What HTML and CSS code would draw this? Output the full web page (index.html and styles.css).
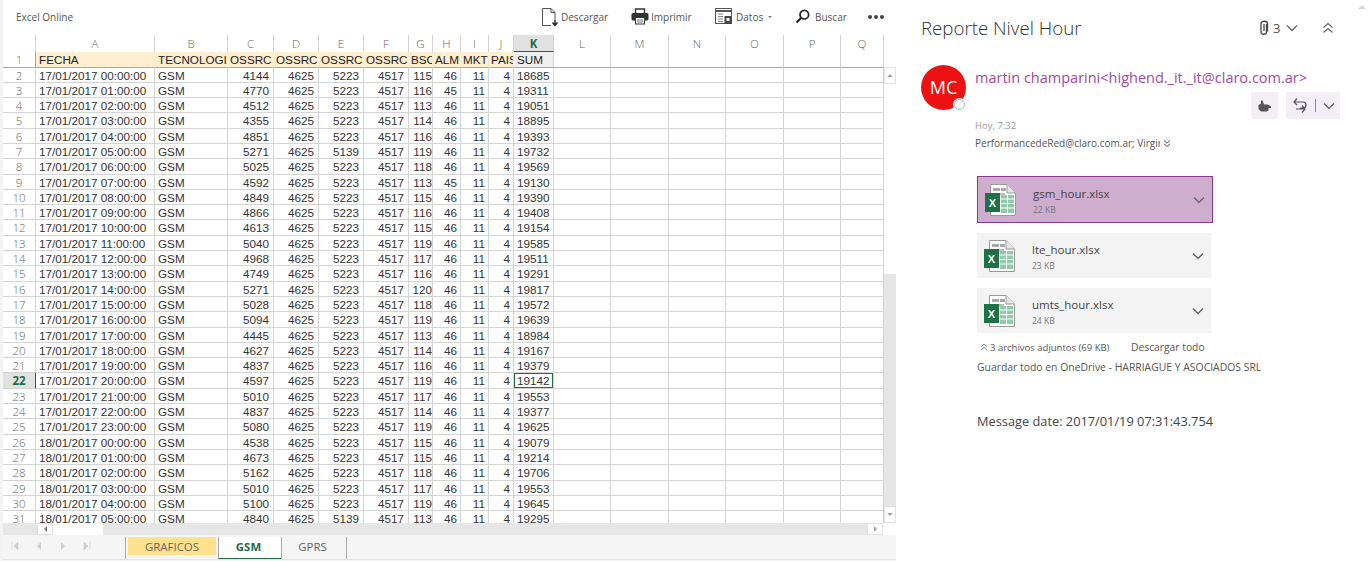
FILE: index.html
```html
<!DOCTYPE html>
<html lang="en">
<head>
  <meta charset="UTF-8">
  <title>Reporte Nivel Hour</title>
  <link rel="stylesheet" href="styles.css">
</head>
<body>
  <svg class="defs" width="0" height="0">
    <symbol id="xls" viewBox="0 0 34 34">
      <path d="M6.5 1.5H23L31.5 10V32.5H6.5Z" fill="#fff" stroke="#9a9a9a"/>
      <path d="M23 1.5V10H31.5" fill="#e4e4e4" stroke="#9a9a9a"/>
      <rect x="9" y="5" width="7" height="3" fill="#a8a8a8"/>
      <rect x="17" y="5" width="5" height="3" fill="#a8a8a8"/>
      <rect x="9" y="10" width="12" height="2.5" fill="#bdbdbd"/>
      <path d="M17 12H30V30H17Z" fill="#8fcbaa"/>
      <path d="M17 16H30M17 20.5H30M17 25H30M23.5 12V30" stroke="#fff" stroke-width="1"/>
      <rect x="1" y="10" width="15" height="19" fill="#1e7145"/>
      <text x="8.5" y="24" class="xls-x">X</text>
    </symbol>
    <symbol id="chev" viewBox="0 0 12 8">
      <path d="M1 1.5L6 6.5L11 1.5" fill="none" stroke="currentColor" stroke-width="1.4"/>
    </symbol>
    <symbol id="dbl-up" viewBox="0 0 12 12">
      <path d="M1.5 5.5L6 1.5L10.5 5.5M1.5 10.5L6 6.5L10.5 10.5" fill="none" stroke="currentColor" stroke-width="1.2"/>
    </symbol>
  </svg>

  <div class="excel">
    <header class="toolbar">
      <span class="brand">Excel Online</span>
      <nav class="tools">
        <span class="tool tool-dl">
          <svg width="18" height="20" viewBox="0 0 18 20"><path d="M1.5 1.5H10L14 5.5V12M10 1.5V5.5H14M1.5 1.5V18.5H10" fill="none" stroke="#555" stroke-width="1"/><path d="M14 12.5V18M11.5 15.5L14 18.5L16.5 15.5" fill="none" stroke="#222" stroke-width="1.4"/></svg>
          Descargar
        </span>
        <span class="tool tool-print">
          <svg width="18" height="17" viewBox="0 0 18 17"><path d="M4.5 5V1H13.5V5" fill="none" stroke="#333" stroke-width="1.4"/><rect x="0.5" y="5" width="17" height="7.5" rx="1.5" fill="#333"/><rect x="4.5" y="9.5" width="9" height="6.5" fill="#fff" stroke="#333"/><path d="M6 12H12M6 14H12" stroke="#777"/></svg>
          Imprimir
        </span>
        <span class="tool tool-data">
          <svg width="18" height="17" viewBox="0 0 18 17"><rect x="0.5" y="0.5" width="16" height="15" fill="#fff" stroke="#555"/><path d="M1 3H16" stroke="#555" stroke-width="2"/><path d="M3 6H8M3 8.5H8M3 11H8M3 13.5H8" stroke="#888" stroke-width="1.2"/><rect x="9.5" y="8" width="7" height="8" fill="#444"/><rect x="11.5" y="10" width="3" height="3" fill="#fff"/></svg>
          Datos <i class="caret"></i>
        </span>
        <span class="tool tool-find">
          <svg width="15" height="15" viewBox="0 0 15 15"><circle cx="9.3" cy="5.7" r="4.3" fill="none" stroke="#222" stroke-width="1.7"/><path d="M6 9L1.5 13.5" stroke="#222" stroke-width="2.2"/></svg>
          Buscar
        </span>
        <span class="more"><b></b><b></b><b></b></span>
      </nav>
    </header>

    <div class="sheet-area">
      <div class="sheet">
        <div class="row heads">
          <span></span><span>A</span><span>B</span><span>C</span><span>D</span><span>E</span><span>F</span><span>G</span><span>H</span><span>I</span><span>J</span><span class="on">K</span><span>L</span><span>M</span><span>N</span><span>O</span><span>P</span><span>Q</span>
        </div>
        <div class="row title-row">
          <span>1</span><span>FECHA</span><span>TECNOLOGIA</span><span>OSSRC</span><span>OSSRC</span><span>OSSRC</span><span>OSSRC</span><span>BSC</span><span>ALM</span><span>MKT</span><span>PAIS</span><span>SUM</span><span></span><span></span><span></span><span></span><span></span><span></span>
        </div>
        <div class="row"><span>2</span><span>17/01/2017 00:00:00</span><span>GSM</span><span>4144</span><span>4625</span><span>5223</span><span>4517</span><span>115</span><span>46</span><span>11</span><span>4</span><span>18685</span><span></span><span></span><span></span><span></span><span></span><span></span></div>
        <div class="row"><span>3</span><span>17/01/2017 01:00:00</span><span>GSM</span><span>4770</span><span>4625</span><span>5223</span><span>4517</span><span>116</span><span>45</span><span>11</span><span>4</span><span>19311</span><span></span><span></span><span></span><span></span><span></span><span></span></div>
        <div class="row"><span>4</span><span>17/01/2017 02:00:00</span><span>GSM</span><span>4512</span><span>4625</span><span>5223</span><span>4517</span><span>113</span><span>46</span><span>11</span><span>4</span><span>19051</span><span></span><span></span><span></span><span></span><span></span><span></span></div>
        <div class="row"><span>5</span><span>17/01/2017 03:00:00</span><span>GSM</span><span>4355</span><span>4625</span><span>5223</span><span>4517</span><span>114</span><span>46</span><span>11</span><span>4</span><span>18895</span><span></span><span></span><span></span><span></span><span></span><span></span></div>
        <div class="row"><span>6</span><span>17/01/2017 04:00:00</span><span>GSM</span><span>4851</span><span>4625</span><span>5223</span><span>4517</span><span>116</span><span>46</span><span>11</span><span>4</span><span>19393</span><span></span><span></span><span></span><span></span><span></span><span></span></div>
        <div class="row"><span>7</span><span>17/01/2017 05:00:00</span><span>GSM</span><span>5271</span><span>4625</span><span>5139</span><span>4517</span><span>119</span><span>46</span><span>11</span><span>4</span><span>19732</span><span></span><span></span><span></span><span></span><span></span><span></span></div>
        <div class="row"><span>8</span><span>17/01/2017 06:00:00</span><span>GSM</span><span>5025</span><span>4625</span><span>5223</span><span>4517</span><span>118</span><span>46</span><span>11</span><span>4</span><span>19569</span><span></span><span></span><span></span><span></span><span></span><span></span></div>
        <div class="row"><span>9</span><span>17/01/2017 07:00:00</span><span>GSM</span><span>4592</span><span>4625</span><span>5223</span><span>4517</span><span>113</span><span>45</span><span>11</span><span>4</span><span>19130</span><span></span><span></span><span></span><span></span><span></span><span></span></div>
        <div class="row"><span>10</span><span>17/01/2017 08:00:00</span><span>GSM</span><span>4849</span><span>4625</span><span>5223</span><span>4517</span><span>115</span><span>46</span><span>11</span><span>4</span><span>19390</span><span></span><span></span><span></span><span></span><span></span><span></span></div>
        <div class="row"><span>11</span><span>17/01/2017 09:00:00</span><span>GSM</span><span>4866</span><span>4625</span><span>5223</span><span>4517</span><span>116</span><span>46</span><span>11</span><span>4</span><span>19408</span><span></span><span></span><span></span><span></span><span></span><span></span></div>
        <div class="row"><span>12</span><span>17/01/2017 10:00:00</span><span>GSM</span><span>4613</span><span>4625</span><span>5223</span><span>4517</span><span>115</span><span>46</span><span>11</span><span>4</span><span>19154</span><span></span><span></span><span></span><span></span><span></span><span></span></div>
        <div class="row"><span>13</span><span>17/01/2017 11:00:00</span><span>GSM</span><span>5040</span><span>4625</span><span>5223</span><span>4517</span><span>119</span><span>46</span><span>11</span><span>4</span><span>19585</span><span></span><span></span><span></span><span></span><span></span><span></span></div>
        <div class="row"><span>14</span><span>17/01/2017 12:00:00</span><span>GSM</span><span>4968</span><span>4625</span><span>5223</span><span>4517</span><span>117</span><span>46</span><span>11</span><span>4</span><span>19511</span><span></span><span></span><span></span><span></span><span></span><span></span></div>
        <div class="row"><span>15</span><span>17/01/2017 13:00:00</span><span>GSM</span><span>4749</span><span>4625</span><span>5223</span><span>4517</span><span>116</span><span>46</span><span>11</span><span>4</span><span>19291</span><span></span><span></span><span></span><span></span><span></span><span></span></div>
        <div class="row"><span>16</span><span>17/01/2017 14:00:00</span><span>GSM</span><span>5271</span><span>4625</span><span>5223</span><span>4517</span><span>120</span><span>46</span><span>11</span><span>4</span><span>19817</span><span></span><span></span><span></span><span></span><span></span><span></span></div>
        <div class="row"><span>17</span><span>17/01/2017 15:00:00</span><span>GSM</span><span>5028</span><span>4625</span><span>5223</span><span>4517</span><span>118</span><span>46</span><span>11</span><span>4</span><span>19572</span><span></span><span></span><span></span><span></span><span></span><span></span></div>
        <div class="row"><span>18</span><span>17/01/2017 16:00:00</span><span>GSM</span><span>5094</span><span>4625</span><span>5223</span><span>4517</span><span>119</span><span>46</span><span>11</span><span>4</span><span>19639</span><span></span><span></span><span></span><span></span><span></span><span></span></div>
        <div class="row"><span>19</span><span>17/01/2017 17:00:00</span><span>GSM</span><span>4445</span><span>4625</span><span>5223</span><span>4517</span><span>113</span><span>46</span><span>11</span><span>4</span><span>18984</span><span></span><span></span><span></span><span></span><span></span><span></span></div>
        <div class="row"><span>20</span><span>17/01/2017 18:00:00</span><span>GSM</span><span>4627</span><span>4625</span><span>5223</span><span>4517</span><span>114</span><span>46</span><span>11</span><span>4</span><span>19167</span><span></span><span></span><span></span><span></span><span></span><span></span></div>
        <div class="row"><span>21</span><span>17/01/2017 19:00:00</span><span>GSM</span><span>4837</span><span>4625</span><span>5223</span><span>4517</span><span>116</span><span>46</span><span>11</span><span>4</span><span>19379</span><span></span><span></span><span></span><span></span><span></span><span></span></div>
        <div class="row active"><span>22</span><span>17/01/2017 20:00:00</span><span>GSM</span><span>4597</span><span>4625</span><span>5223</span><span>4517</span><span>119</span><span>46</span><span>11</span><span>4</span><span>19142</span><span></span><span></span><span></span><span></span><span></span><span></span></div>
        <div class="row"><span>23</span><span>17/01/2017 21:00:00</span><span>GSM</span><span>5010</span><span>4625</span><span>5223</span><span>4517</span><span>117</span><span>46</span><span>11</span><span>4</span><span>19553</span><span></span><span></span><span></span><span></span><span></span><span></span></div>
        <div class="row"><span>24</span><span>17/01/2017 22:00:00</span><span>GSM</span><span>4837</span><span>4625</span><span>5223</span><span>4517</span><span>114</span><span>46</span><span>11</span><span>4</span><span>19377</span><span></span><span></span><span></span><span></span><span></span><span></span></div>
        <div class="row"><span>25</span><span>17/01/2017 23:00:00</span><span>GSM</span><span>5080</span><span>4625</span><span>5223</span><span>4517</span><span>119</span><span>46</span><span>11</span><span>4</span><span>19625</span><span></span><span></span><span></span><span></span><span></span><span></span></div>
        <div class="row"><span>26</span><span>18/01/2017 00:00:00</span><span>GSM</span><span>4538</span><span>4625</span><span>5223</span><span>4517</span><span>115</span><span>46</span><span>11</span><span>4</span><span>19079</span><span></span><span></span><span></span><span></span><span></span><span></span></div>
        <div class="row"><span>27</span><span>18/01/2017 01:00:00</span><span>GSM</span><span>4673</span><span>4625</span><span>5223</span><span>4517</span><span>115</span><span>46</span><span>11</span><span>4</span><span>19214</span><span></span><span></span><span></span><span></span><span></span><span></span></div>
        <div class="row"><span>28</span><span>18/01/2017 02:00:00</span><span>GSM</span><span>5162</span><span>4625</span><span>5223</span><span>4517</span><span>118</span><span>46</span><span>11</span><span>4</span><span>19706</span><span></span><span></span><span></span><span></span><span></span><span></span></div>
        <div class="row"><span>29</span><span>18/01/2017 03:00:00</span><span>GSM</span><span>5010</span><span>4625</span><span>5223</span><span>4517</span><span>117</span><span>46</span><span>11</span><span>4</span><span>19553</span><span></span><span></span><span></span><span></span><span></span><span></span></div>
        <div class="row"><span>30</span><span>18/01/2017 04:00:00</span><span>GSM</span><span>5100</span><span>4625</span><span>5223</span><span>4517</span><span>119</span><span>46</span><span>11</span><span>4</span><span>19645</span><span></span><span></span><span></span><span></span><span></span><span></span></div>
        <div class="row"><span>31</span><span>18/01/2017 05:00:00</span><span>GSM</span><span>4840</span><span>4625</span><span>5139</span><span>4517</span><span>113</span><span>46</span><span>11</span><span>4</span><span>19295</span><span></span><span></span><span></span><span></span><span></span><span></span></div>
      </div>
      <div class="vbar">
        <div class="vbar-gap"></div>
        <div class="sb-btn"><i class="tri tri-up"></i></div>
        <div class="vbar-thumb"></div>
        <div class="vbar-track"></div>
        <div class="sb-btn"><i class="tri tri-down"></i></div>
      </div>
    </div>

    <div class="hbar">
      <div class="sb-btn hbar-btn"><i class="tri tri-left"></i></div>
      <div class="hbar-thumb"></div>
      <div class="hbar-track"></div>
      <div class="sb-btn hbar-btn"><i class="tri tri-right"></i></div>
      <div class="hbar-corner"></div>
    </div>

    <footer class="tabs">
      <div class="tab-nav">
        <svg width="8" height="8" viewBox="0 0 8 8"><path d="M1 0V8M7 0V8L3 4Z" fill="#cfcfcf" stroke="#cfcfcf" stroke-width="0.6"/></svg>
        <svg width="8" height="8" viewBox="0 0 8 8"><path d="M6 0V8L2 4Z" fill="#cfcfcf"/></svg>
        <svg width="8" height="8" viewBox="0 0 8 8"><path d="M2 0V8L6 4Z" fill="#cfcfcf"/></svg>
        <svg width="8" height="8" viewBox="0 0 8 8"><path d="M7 0V8M1 0V8L5 4Z" fill="#cfcfcf" stroke="#cfcfcf" stroke-width="0.6"/></svg>
      </div>
      <span class="tab tab-yellow">GRAFICOS</span>
      <span class="tab tab-active">GSM</span>
      <span class="tab tab-plain">GPRS</span>
    </footer>
  </div>

  <main class="mail">
    <i class="mail-scroll"></i>
    <div class="subject-row">
      <h1 class="subject">Reporte Nivel Hour</h1>
      <div class="subject-side">
        <svg class="clip" width="10" height="16" viewBox="0 0 10 16"><path d="M7.5 4V12C7.5 15 2 15 2 12V3.5C2 .5 8.5 .5 8.5 3.5V11.5" fill="none" stroke="#444" stroke-width="1.3"/><path d="M5 4V11" stroke="#444" stroke-width="1.3"/></svg>
        <span class="count">3</span>
        <svg class="ico-chev" width="12" height="8"><use href="#chev"/></svg>
        <svg class="ico-dbl" width="12" height="12"><use href="#dbl-up"/></svg>
      </div>
    </div>

    <section class="from">
      <div class="avatar">MC<i class="presence"></i></div>
      <div class="from-body">
        <a class="sender">martin champarini&lt;highend._it._it@claro.com.ar&gt;</a>
        <div class="actions">
          <span class="act act-like">
            <svg width="13" height="12" viewBox="0 0 13 12"><path d="M3 .5H4.5L6 4.5H10L13 6.5V8H10.5V10.5L8.5 11.5H3L.5 9V5L3 3.5Z" fill="#555"/></svg>
          </span>
          <span class="act act-reply">
            <svg width="16" height="17" viewBox="0 0 16 17"><path d="M5 1.5L2 5L5 8M2 5H11C15 5 15 11 11 11H8M10 8.5L13 12L10 15.5M13 12H4" fill="none" stroke="#555" stroke-width="1.2"/></svg>
            <i class="act-sep"></i>
            <svg class="ico-chev" width="12" height="8"><use href="#chev"/></svg>
          </span>
        </div>
        <div class="when">Hoy, 7:32</div>
        <div class="to">
          <span class="to-text">PerformancedeRed@claro.com.ar; Virginia</span>
          <svg width="8" height="9" viewBox="0 0 12 12"><path d="M1.5 1.5L6 5.5L10.5 1.5M1.5 6.5L6 10.5L10.5 6.5" fill="none" stroke="#555" stroke-width="1.5"/></svg>
        </div>
      </div>
    </section>

    <section class="files">
      <div class="file file-on">
        <svg class="file-ico" width="34" height="34"><use href="#xls"/></svg>
        <div class="file-info"><div class="file-name">gsm_hour.xlsx</div><div class="file-size">22 KB</div></div>
        <svg class="ico-chev" width="12" height="8"><use href="#chev"/></svg>
      </div>
      <div class="file">
        <svg class="file-ico" width="34" height="34"><use href="#xls"/></svg>
        <div class="file-info"><div class="file-name">lte_hour.xlsx</div><div class="file-size">23 KB</div></div>
        <svg class="ico-chev" width="12" height="8"><use href="#chev"/></svg>
      </div>
      <div class="file">
        <svg class="file-ico" width="34" height="34"><use href="#xls"/></svg>
        <div class="file-info"><div class="file-name">umts_hour.xlsx</div><div class="file-size">24 KB</div></div>
        <svg class="ico-chev" width="12" height="8"><use href="#chev"/></svg>
      </div>
    </section>

    <div class="files-meta">
      <svg width="8" height="8"><use href="#dbl-up"/></svg>
      <span class="files-count">3 archivos adjuntos (69 KB)</span>
      <span class="files-dl">Descargar todo</span>
    </div>
    <div class="files-save">Guardar todo en OneDrive - HARRIAGUE Y ASOCIADOS SRL</div>
    <p class="msg-date">Message date: 2017/01/19 07:31:43.754</p>
  </main>
</body>
</html>
```

FILE: styles.css
```css
* {
  box-sizing: border-box;
}
html, body {
  height: 100%;
}
body {
  margin: 0;
  display: flex;
  overflow: hidden;
  background: #fff;
  color: #444;
  font-family: 'Open Sans', sans-serif;
}
.defs {
  position: absolute;
}
.xls-x {
  font: bold 11px 'Liberation Sans', sans-serif;
  fill: #fff;
  text-anchor: middle;
}

/* Excel side */
.excel {
  width: 896px;
  height: 561px;
  flex: none;
  display: flex;
  flex-direction: column;
  padding-left: 3px;
  background: #f3f3f3;
}
.toolbar {
  height: 35px;
  flex: none;
  display: flex;
  align-items: center;
  justify-content: space-between;
  background: #fff;
  padding: 0 0 2px 13px;
  font-size: 10px;
  color: #555;
}
.tools {
  display: flex;
  align-items: center;
}
.tool {
  display: flex;
  align-items: center;
  gap: 2px;
}
.tool-dl { width: 90px; }
.tool-print { width: 84px; }
.tool-data { width: 80px; gap: 3px; }
.tool-find { width: 73px; gap: 5px; }
.caret {
  width: 0;
  height: 0;
  margin-left: 2px;
  border: 2.5px solid transparent;
  border-top-color: #777;
  border-bottom: 0;
}
.more {
  display: flex;
  gap: 2px;
  width: 28px;
}
.more b {
  width: 4px;
  height: 4px;
  border-radius: 50%;
  background: #444;
}

.sheet-area {
  height: 488px;
  flex: none;
  display: flex;
  background: #fff;
}
.sheet {
  width: 881px;
  overflow: hidden;
  font: 11.7px/15px 'Liberation Sans', sans-serif;
  color: #333;
}
.row {
  height: 15.3px;
  display: grid;
  grid-template-columns: 33px 119px 73px 46px 45px 45px 45px 24px 28px 28px 25px 40px 57px 58px 57px 58px 57px 43px;
}
.row span {
  border-right: 1px solid #d4d4d4;
  border-bottom: 1px solid #d4d4d4;
  padding: 0 3px;
  overflow: hidden;
  white-space: nowrap;
  min-width: 0;
}
.row span:nth-child(1) {
  padding: 0;
  text-align: center;
  font-family: 'Open Sans', sans-serif;
  font-size: 11.5px;
  font-weight: 300;
  color: #666;
  background: #fff;
}
.row span:nth-child(n+4):nth-child(-n+11) {
  text-align: right;
}
.row span:nth-child(n+4):nth-child(-n+7) {
  padding-right: 4px;
}
.row span:nth-child(8) {
  padding: 0 0 0 2px;
}
.heads {
  height: 17px;
}
.heads span,
.heads span:nth-child(n+4):nth-child(-n+11) {
  border-bottom: 0;
  padding: 0;
  text-align: center;
  font-family: 'Open Sans', sans-serif;
  font-size: 11.5px;
  font-weight: 300;
  line-height: 17px;
  color: #666;
}
.heads .on,
.heads .on:nth-child(n+4) {
  background: #e1e1e1;
  border-bottom: 1px solid #1e6b45;
  color: #1e6b45;
  font-weight: 700;
}
.title-row {
  height: 15.5px;
}
.title-row span {
  background: #ffeecf;
  border-right-color: #ffeecf;
  border-bottom-color: #a9a9a9;
  color: #222;
}
.title-row span:nth-child(n+4):nth-child(-n+11) {
  text-align: left;
  padding: 0 0 0 2px;
}
.title-row span:nth-child(1) {
  border-right-color: #a9a9a9;
}
.title-row span:nth-child(12) {
  background: #efefef;
  border-right-color: #d4d4d4;
}
.title-row span:nth-child(n+13) {
  background: #fff;
  border-right-color: #d4d4d4;
}
.active span:nth-child(1) {
  background: #e1e1e1;
  color: #1e6b45;
  font-weight: 700;
  border-right: 1px solid #1e6b45;
}
.active span:nth-child(12) {
  box-shadow: inset 0 0 0 1px #1e6b45;
}

.vbar {
  width: 12px;
  flex: none;
  display: flex;
  flex-direction: column;
}
.vbar-gap {
  height: 32px;
}
.sb-btn {
  height: 17px;
  flex: none;
  display: flex;
  align-items: center;
  justify-content: center;
  background: #fff;
  border: 1px solid #e1e1e1;
}
.vbar-thumb {
  height: 190px;
  background: #fff;
}
.vbar-track {
  flex: 1;
  background: #e6e6e6;
}
.tri {
  width: 0;
  height: 0;
  border: 3.5px solid transparent;
}
.tri-up { border-bottom-color: #a6a6a6; border-top: 0; }
.tri-down { border-top-color: #a6a6a6; border-bottom: 0; }
.tri-left { border-right-color: #777; border-left: 0; }
.tri-right { border-left-color: #a6a6a6; border-right: 0; }

.hbar {
  height: 12px;
  flex: none;
  display: flex;
  background: #e6e6e6;
}
.hbar-btn {
  height: 12px;
  width: 16px;
  margin-left: 34px;
}
.hbar-btn:nth-last-child(2) {
  margin-left: 0;
}
.hbar-thumb {
  width: 50px;
  background: #fff;
}
.hbar-track {
  flex: 1;
}
.hbar-corner {
  width: 13px;
  background: #fff;
}

.tabs {
  height: 25px;
  flex: none;
  display: flex;
  align-items: flex-start;
  padding-top: 2px;
  background: #f5f5f5;
  border-bottom: 1px solid #e4e4e4;
  font-size: 11.4px;
  color: #666;
}
.tab-nav {
  width: 122px;
  height: 18px;
  flex: none;
  display: flex;
  align-items: center;
  gap: 16px;
  padding-left: 8px;
}
.tab {
  height: 22px;
  display: flex;
  justify-content: center;
  align-items: center;
  padding-bottom: 3px;
  border-left: 1px solid #aaa;
}
.tab-yellow {
  width: 93px;
  padding: 0 2px 4px 2px;
  background: #ffe08c;
  background-clip: content-box;
}
.tab-active {
  width: 63px;
  padding-right: 3px;
  background: #fff;
  border-bottom: 1px solid #1e6b45;
  color: #1e6b45;
  font-weight: 700;
}
.tab-plain {
  width: 66px;
  padding-right: 3px;
  border-right: 1px solid #aaa;
}

/* Mail side */
.mail {
  position: relative;
  flex: 1;
  padding-left: 25px;
}
.mail-scroll {
  position: absolute;
  top: 5px;
  right: 2px;
  width: 0;
  height: 0;
  border: 4px solid transparent;
  border-bottom-color: #d9d9d9;
  border-top: 0;
}
.subject-row {
  height: 24px;
  margin-top: 16px;
  display: flex;
  align-items: center;
}
.subject {
  width: 338px;
  flex: none;
  margin: 0;
  font-size: 18.7px;
  font-weight: 300;
  line-height: 24px;
  color: #333;
}
.subject-side {
  display: flex;
  align-items: center;
  color: #555;
  font-size: 13px;
}
.count {
  margin: 0 6px 0 4px;
}
.ico-chev {
  flex: none;
  color: #666;
}
.ico-dbl {
  margin-left: 24px;
  color: #666;
}
.from {
  display: flex;
  margin-top: 25px;
}
.avatar {
  position: relative;
  width: 45px;
  height: 45px;
  flex: none;
  border-radius: 50%;
  background: #ee1111;
  color: #fff;
  font-size: 18px;
  line-height: 45px;
  text-align: center;
}
.presence {
  position: absolute;
  right: 1px;
  bottom: 0;
  width: 11px;
  height: 11px;
  border-radius: 50%;
  background: #fff;
  border: 1px solid #9cc8dc;
  box-shadow: 0 0 0 1px #fff;
}
.from-body {
  margin-left: 9px;
  width: 365px;
}
.sender {
  display: block;
  margin-top: 4px;
  font-size: 14.5px;
  line-height: 18px;
  color: #a349a4;
  white-space: nowrap;
}
.actions {
  display: flex;
  justify-content: flex-end;
  gap: 8px;
  margin-top: 5px;
}
.act {
  height: 27px;
  display: flex;
  align-items: center;
  justify-content: center;
  background: #f4eff6;
}
.act-like {
  width: 27px;
}
.act-reply {
  width: 54px;
  gap: 7px;
}
.act-sep {
  width: 1px;
  height: 13px;
  background: #888;
}
.when {
  font-size: 9.5px;
  line-height: 14px;
  color: #999;
}
.to {
  display: flex;
  align-items: center;
  gap: 3px;
  margin-top: 3px;
  font-size: 10px;
  line-height: 14px;
  color: #555;
}
.to-text {
  width: 185px;
  overflow: hidden;
  white-space: nowrap;
}
.files {
  margin: 26px 0 0 56px;
  display: flex;
  flex-direction: column;
  gap: 10px;
}
.file {
  width: 234px;
  height: 45px;
  display: flex;
  align-items: center;
  background: #f3f3f3;
  padding: 0 7px 0 6px;
}
.file-on {
  width: 236px;
  height: 47px;
  background: #cfadcf;
  border: 1px solid #8b3a8b;
}
.file-info {
  flex: 1;
  margin-left: 15px;
  padding-top: 3px;
}
.file-name {
  font-size: 11.5px;
  line-height: 16px;
  color: #444;
}
.file-size {
  margin-top: 2px;
  font-size: 8.5px;
  line-height: 12px;
  color: #777;
}
.files-meta {
  display: flex;
  align-items: center;
  margin: 7px 0 0 56px;
  height: 14px;
  font-size: 9.5px;
  color: #555;
}
.files-meta svg {
  color: #666;
  margin: 0 2px 0 3px;
}
.files-count {
  width: 141px;
  flex: none;
}
.files-dl {
  font-size: 10.3px;
}
.files-save {
  margin: 6px 0 0 56px;
  font-size: 10.4px;
  line-height: 14px;
  color: #555;
}
.msg-date {
  margin: 38px 0 0 56px;
  font-size: 12.8px;
  line-height: 18px;
  color: #444;
}
```
